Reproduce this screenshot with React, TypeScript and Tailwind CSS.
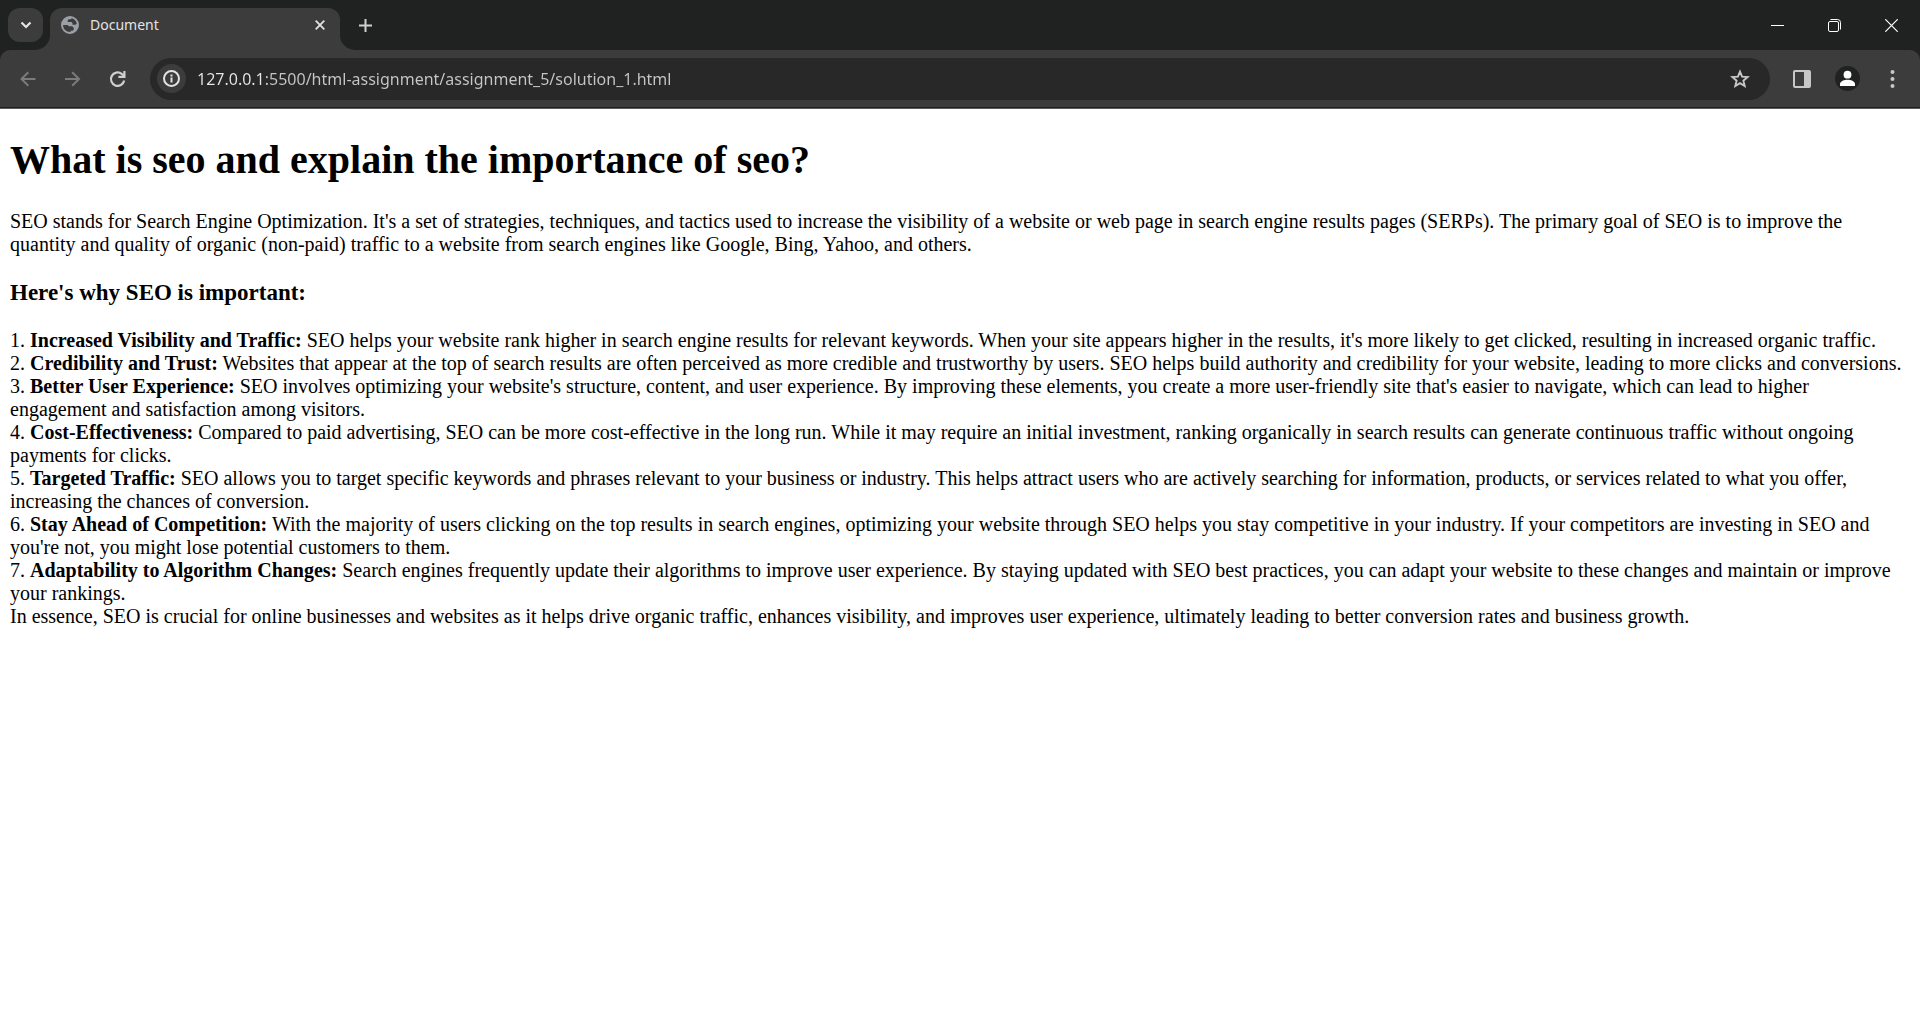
import React from "react";

const points = [
  {
    title: "Increased Visibility and Traffic:",
    text: "SEO helps your website rank higher in search engine results for relevant keywords. When your site appears higher in the results, it's more likely to get clicked, resulting in increased organic traffic.",
  },
  {
    title: "Credibility and Trust:",
    text: "Websites that appear at the top of search results are often perceived as more credible and trustworthy by users. SEO helps build authority and credibility for your website, leading to more clicks and conversions.",
  },
  {
    title: "Better User Experience:",
    text: "SEO involves optimizing your website's structure, content, and user experience. By improving these elements, you create a more user-friendly site that's easier to navigate, which can lead to higher engagement and satisfaction among visitors.",
  },
  {
    title: "Cost-Effectiveness:",
    text: "Compared to paid advertising, SEO can be more cost-effective in the long run. While it may require an initial investment, ranking organically in search results can generate continuous traffic without ongoing payments for clicks.",
  },
  {
    title: "Targeted Traffic:",
    text: "SEO allows you to target specific keywords and phrases relevant to your business or industry. This helps attract users who are actively searching for information, products, or services related to what you offer, increasing the chances of conversion.",
  },
  {
    title: "Stay Ahead of Competition:",
    text: "With the majority of users clicking on the top results in search engines, optimizing your website through SEO helps you stay competitive in your industry. If your competitors are investing in SEO and you're not, you might lose potential customers to them.",
  },
  {
    title: "Adaptability to Algorithm Changes:",
    text: "Search engines frequently update their algorithms to improve user experience. By staying updated with SEO best practices, you can adapt your website to these changes and maintain or improve your rankings.",
  },
];

function GlobeIcon() {
  return (
    <svg className="size-[18px]" viewBox="0 0 18 18" aria-hidden="true">
      <circle cx="9" cy="9" r="8" fill="#3c3c3c" stroke="#9aa0a6" strokeWidth="2" />
      <path
        d="M11.500 1.200 9.800 3.200H8.300c-1 0-1.600.6-1.600 1.500v1.300h3.200c1 0 1.600.6 1.600 1.500v1.300h2.700L16.800 7.500 17 9c-.2 4-3 7.300-7 7.900l-.500-2.100h1.700c.9 0 1.500-.6 1.500-1.500v-1.500l-1.500-1.500H8.500c-.9 0-1.500-.5-1.500-1.300H1C1 4 5 .5 11.500 1.200z"
        fill="#9aa0a6"
      />
    </svg>
  );
}

function TabCurve({ className }: { className: string }) {
  return (
    <svg className={className} viewBox="0 0 15 15" aria-hidden="true">
      <path d="M15 0v15H0A15 15 0 0 0 15 0z" fill="#3c3c3c" />
    </svg>
  );
}

function TabStrip() {
  return (
    <header className="flex h-[50px] items-start bg-[#202221] pl-2 pt-2">
      <button aria-label="Search tabs" className="flex h-[34px] w-[35px] items-center justify-center rounded-xl bg-[#3c3c3c]">
        <svg className="size-3" viewBox="0 0 12 12" fill="none" stroke="#e6e6e6" strokeWidth="2.200" aria-hidden="true">
          <path d="M1.500 3.500 6 8l4.500-4.500" />
        </svg>
      </button>
      <div className="relative ml-[7px] flex h-[42px] w-[290px] items-start rounded-t-xl bg-[#3c3c3c] pl-[11px] pr-[15px]">
        <TabCurve className="absolute -left-[15px] bottom-0 size-[15px]" />
        <TabCurve className="absolute -right-[15px] bottom-0 size-[15px] -scale-x-100" />
        <div className="flex h-[34px] w-full items-center">
          <GlobeIcon />
          <span className="ml-[11px] flex-1 text-[14px] leading-5 text-[#e3e3e3]">Document</span>
          <button aria-label="Close tab">
            <svg className="size-[10px]" viewBox="0 0 10 10" stroke="#e3e3e3" strokeWidth="1.800" aria-hidden="true">
              <path d="M.7.7l8.600 8.600M9.300.7L.7 9.300" />
            </svg>
          </button>
        </div>
      </div>
      <button aria-label="New tab" className="ml-[19px] flex h-[34px] items-center">
        <svg className="size-[13px]" viewBox="0 0 13 13" stroke="#d0d0d0" strokeWidth="2" aria-hidden="true">
          <path d="M6.500 0v13M0 6.500h13" />
        </svg>
      </button>
      <div className="ml-auto flex h-[34px]">
        <button aria-label="Minimize" className="flex w-[57px] items-center justify-center">
          <svg className="size-[13px]" viewBox="0 0 13 13" stroke="#fff" aria-hidden="true">
            <path d="M0 6.500h13" />
          </svg>
        </button>
        <button aria-label="Restore" className="flex w-[57px] items-center justify-center">
          <svg className="size-[13px]" viewBox="0 0 13 13" fill="none" stroke="#fff" aria-hidden="true">
            <rect x=".5" y="2.500" width="10" height="10" rx="1.500" />
            <path d="M2.500.5h7a3 3 0 0 1 3 3v7" />
          </svg>
        </button>
        <button aria-label="Close" className="flex w-[57px] items-center justify-center">
          <svg className="size-[13px]" viewBox="0 0 13 13" stroke="#fff" strokeWidth="1.200" aria-hidden="true">
            <path d="M.3.3l12.400 12.400M12.700.3L.3 12.700" />
          </svg>
        </button>
      </div>
    </header>
  );
}

function Toolbar() {
  return (
    <div className="bg-[#202221]">
      <div className="flex h-[57px] items-center rounded-t-[10px] bg-[#3c3c3c] pl-5 pr-[25px]">
        <button aria-label="Back">
          <svg className="size-4" viewBox="0 0 16 16" fill="none" stroke="#7b7b7b" strokeWidth="2" aria-hidden="true">
            <path d="M15.500 8H1.500M8.300 1.200 1.500 8l6.800 6.800" />
          </svg>
        </button>
        <button aria-label="Forward" className="ml-[29px]">
          <svg className="size-4" viewBox="0 0 16 16" fill="none" stroke="#7b7b7b" strokeWidth="2" aria-hidden="true">
            <path d="M0 8h14M7.200 1.200 14 8l-6.800 6.800" />
          </svg>
        </button>
        <button aria-label="Reload" className="ml-7">
          <svg className="size-[18px]" viewBox="0 0 18 18" fill="none" stroke="#cfcfcf" strokeWidth="2.200" aria-hidden="true">
            <path d="M15.200 10.500A6.700 6.700 0 1 1 12.700 3.800l2.300 2" />
            <path d="M15.400 1v5.800h-6" />
          </svg>
        </button>
        <div className="ml-[23px] flex h-[42px] flex-1 items-center rounded-full bg-[#282828] pl-[7px] pr-5">
          <button aria-label="View site information" className="flex size-[29px] items-center justify-center rounded-full bg-[#3c3c3c]">
            <svg className="size-[17px]" viewBox="0 0 17 17" aria-hidden="true">
              <circle cx="8.500" cy="8.500" r="7.500" fill="none" stroke="#e3e3e3" strokeWidth="2" />
              <path d="M7.500 7.500h2v5h-2zM7.500 4.500h2v2h-2z" fill="#e3e3e3" />
            </svg>
          </button>
          <input
            type="text"
            aria-label="Address"
            defaultValue="127.0.0.1:5500/html-assignment/assignment_5/solution_1.html"
            className="ml-[11px] h-7 min-w-0 flex-1 bg-[linear-gradient(90deg,#e8e8e8_68px,#c7c7c7_68px)] bg-clip-text text-[16px] text-transparent outline-none"
          />
          <button aria-label="Bookmark this tab">
            <svg className="size-5" viewBox="0 0 20 20" fill="none" stroke="#c7c7c7" strokeWidth="1.900" aria-hidden="true">
              <path d="M10 2.600l2.100 5 5.500.500-4.200 3.600 1.300 5.400L10 14.200l-4.700 2.900 1.300-5.400L2.400 8.100l5.500-.5z" />
            </svg>
          </button>
        </div>
        <button aria-label="Side panel" className="ml-[23px]">
          <svg className="size-[18px]" viewBox="0 0 18 18" aria-hidden="true">
            <rect x="1" y="1" width="16" height="16" rx="1" fill="none" stroke="#c7c7c7" strokeWidth="2" />
            <path d="M11 1h6v16h-6z" fill="#c7c7c7" />
          </svg>
        </button>
        <button aria-label="Profile" className="ml-6">
          <svg className="size-[25px]" viewBox="0 0 25 25" aria-hidden="true">
            <circle cx="12.500" cy="12.500" r="12.500" fill="#202221" />
            <circle cx="12.500" cy="8.700" r="3.900" fill="#fff" />
            <path d="M5 20v-2c0-2.800 4.500-4.300 7.500-4.300s7.500 1.500 7.500 4.300v2z" fill="#fff" />
          </svg>
        </button>
        <button aria-label="Menu" className="ml-[30px]">
          <svg className="h-[18px] w-[5px]" viewBox="0 0 5 18" fill="#c7c7c7" aria-hidden="true">
            <circle cx="2.500" cy="2" r="2" />
            <circle cx="2.500" cy="9" r="2" />
            <circle cx="2.500" cy="16" r="2" />
          </svg>
        </button>
      </div>
      <div className="h-px bg-[#202020]" />
      <div className="h-px bg-[#5c5c5c]" />
    </div>
  );
}

export default function App() {
  return (
    <div className="flex min-h-screen flex-col bg-white font-['Noto_Sans',sans-serif]">
      <TabStrip />
      <Toolbar />
      <main className="px-[10px] pt-7 font-['Liberation_Serif',serif] text-[20px] leading-[23px] text-black">
        <h1 className="text-[40px] font-bold leading-[46px]">What is seo and explain the importance of seo?</h1>
        <p className="mt-[27px]">
          SEO stands for Search Engine Optimization. It's a set of strategies, techniques, and tactics used to increase the
          visibility of a website or web page in search engine results pages (SERPs). The primary goal of SEO is to improve the
          quantity and quality of organic (non-paid) traffic to a website from search engines like Google, Bing, Yahoo, and
          others.
        </p>
        <h3 className="mt-[23px] text-[23px] font-bold leading-[27px]">Here's why SEO is important:</h3>
        <div className="mt-[23px]">
          {points.map((point, i) => (
            <p key={point.title}>
              {`${i + 1}. `}
              <b>{point.title}</b> {point.text}
            </p>
          ))}
          <p>
            In essence, SEO is crucial for online businesses and websites as it helps drive organic traffic, enhances visibility,
            and improves user experience, ultimately leading to better conversion rates and business growth.
          </p>
        </div>
      </main>
    </div>
  );
}
